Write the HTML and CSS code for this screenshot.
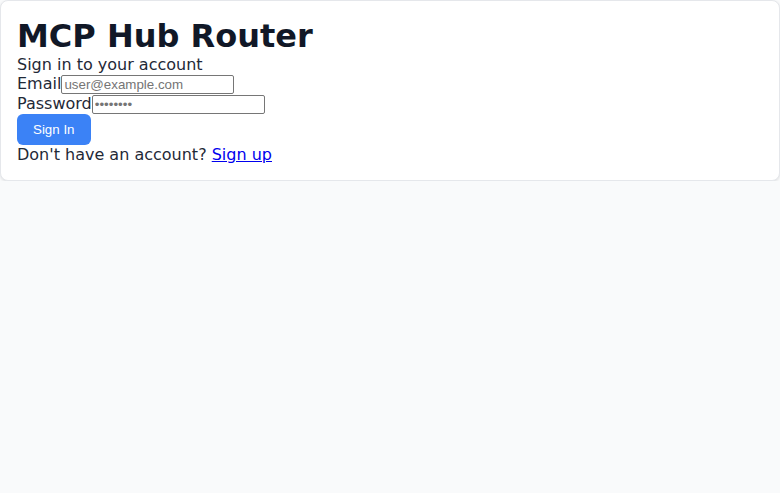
FILE: index.html
```html
<!DOCTYPE html>
<html>
<head>
<meta charset="utf-8">
<link rel="stylesheet" href="styles.css">
</head>
<body>
<div class="card">
  <h1 class="title">MCP Hub Router</h1>
  <p class="subtitle">Sign in to your account</p>
  <form class="form">
    <div class="field"><label for="email">Email</label><input class="input" id="email" type="email" placeholder="user@example.com"></div>
    <div class="field"><label for="pw">Password</label><input class="input" id="pw" type="password" placeholder="••••••••"></div>
    <button type="button" class="btn">Sign In</button>
  </form>
  <p class="footer">Don't have an account? <a href="#">Sign up</a></p>
</div>
</body>
</html>
```

FILE: styles.css
```css
html, body {
  margin: 0;
  background: #f9fafb;
  font-family: "DejaVu Sans", sans-serif;
  color: #1f2937;
  font-size: 16px;
}
.card {
  background: #fff;
  border: 1px solid #e5e7eb;
  border-radius: 8px;
  box-shadow: 0 1px 3px rgba(0,0,0,0.1);
  padding: 16px;
}
.title {
  margin: 0;
  font-size: 32px;
  font-weight: bold;
  color: #111827;
}
.subtitle, .footer { margin: 0; }
.form { margin: 0; }
.field { display: block; }
.input {
  box-sizing: border-box;
  width: 173px;
  height: 19px;
  border: 1px solid #767676;
  border-radius: 2px;
  padding: 1px 2px;
  font-family: "Liberation Sans", Arial, sans-serif;
  font-size: 13.333px;
  margin: 0;
}
.btn {
  background: #3b82f6;
  color: #fff;
  border: none;
  border-radius: 6px;
  padding: 8px 16px;
}
```
